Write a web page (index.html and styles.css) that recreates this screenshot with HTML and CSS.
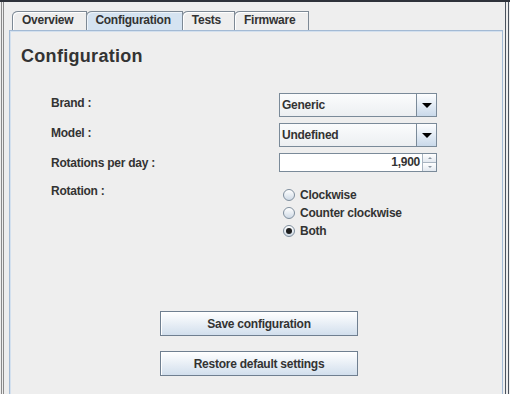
FILE: index.html
```html
<!DOCTYPE html>
<html lang="en">
<head>
    <meta charset="UTF-8">
    <meta name="viewport" content="width=device-width, initial-scale=1.0">
    <title>Configuration</title>
    <link rel="stylesheet" href="styles.css">
</head>
<body>
    <div class="window">
        <div class="tabpane">
            <div class="tabs">
                <div class="tab">Overview</div>
                <div class="tab active">Configuration</div>
                <div class="tab">Tests</div>
                <div class="tab">Firmware</div>
            </div>

            <div class="panel">
                <h1>Configuration</h1>

                <div class="form">
                    <label class="field-label">Brand :</label>
                    <div class="combo">
                        <span class="combo-value">Generic</span>
                        <span class="combo-arrow"></span>
                    </div>

                    <label class="field-label">Model :</label>
                    <div class="combo">
                        <span class="combo-value">Undefined</span>
                        <span class="combo-arrow"></span>
                    </div>

                    <label class="field-label">Rotations per day :</label>
                    <div class="spinner">
                        <span class="spinner-value">1,900</span>
                        <span class="spinner-buttons">
                            <span class="spin up"></span>
                            <span class="spin down"></span>
                        </span>
                    </div>

                    <label class="field-label top">Rotation :</label>
                    <div class="radios">
                        <div class="radio"><span class="radio-dot"></span>Clockwise</div>
                        <div class="radio"><span class="radio-dot"></span>Counter clockwise</div>
                        <div class="radio"><span class="radio-dot checked"></span>Both</div>
                    </div>
                </div>

                <div class="actions">
                    <button class="btn">Save configuration</button>
                    <button class="btn">Restore default settings</button>
                </div>
            </div>
        </div>
    </div>
</body>
</html>
```

FILE: styles.css
```css
* {
    margin: 0;
    padding: 0;
    box-sizing: border-box;
}

body {
    font-family: "Liberation Sans", Arial, sans-serif;
    font-size: 12px;
    font-weight: bold;
    letter-spacing: -0.25px;
    color: #333333;
    background: #eeeeee;
    border-top: 2px solid #2e323a;
    height: 100vh;
    overflow: hidden;
}

.window {
    margin: 0 1px 0 1px;
    height: 100%;
    border-left: 3px double #8a8a8a;
    border-right: 4px double #4b535e;
    padding-top: 9px;
}

.tabpane {
    margin: 0 2px 0 5px;
    height: 100%;
}

/* tab strip */
.tabs {
    display: flex;
    padding-left: 3px;
    height: 19px;
}

.tab {
    padding: 0 13px 2px 9px;
    line-height: 16px;
    border: 1px solid #7d8995;
    border-bottom: none;
    border-top-left-radius: 6px 5px;
    background: #eeeeee;
    box-shadow: inset 1px 1px 0 #ffffff;
}

.tab + .tab {
    margin-left: -1px;
}

.tab.active {
    padding: 0 11px 2px 8px;
    background: #d5e3f1;
    box-shadow: inset 1px 1px 0 #eef4fa;
}

/* panel */
.panel {
    height: 400px;
    border: 1px solid #a3bad4;
    box-shadow: inset 1px 1px 0 #d3e0ee;
    padding: 14px 0 0 11px;
}

h1 {
    font-size: 18px;
    line-height: 22px;
    letter-spacing: 0.3px;
}

.form {
    display: grid;
    grid-template-columns: 228px 158px;
    row-gap: 6px;
    margin: 26px 0 0 30px;
    align-items: center;
}

.field-label {
    align-self: start;
    line-height: 18px;
    margin-top: 1px;
}

.field-label.top {
    margin-top: 4px;
}

/* combo box */
.combo {
    display: flex;
    height: 24px;
    border: 1px solid #7a8a99;
    background: linear-gradient(#fbfcfd, #eceff2);
}

.combo-value {
    flex: 1;
    padding-left: 2px;
    line-height: 22px;
}

.combo-arrow {
    width: 20px;
    border-left: 1px solid #7a8a99;
    background: linear-gradient(#fdfeff, #c9d9ea);
    position: relative;
}

.combo-arrow::after {
    content: "";
    position: absolute;
    left: 5px;
    top: 9px;
    border-left: 5px solid transparent;
    border-right: 5px solid transparent;
    border-top: 5px solid #000000;
}

/* spinner */
.spinner {
    display: flex;
    height: 19px;
    border: 1px solid #7a8a99;
    background: #ffffff;
}

.spinner-value {
    flex: 1;
    text-align: right;
    padding-right: 2px;
    line-height: 17px;
}

.spinner-buttons {
    width: 14px;
    display: flex;
    flex-direction: column;
    border-left: 1px solid #a8b4c0;
}

.spin {
    flex: 1;
    position: relative;
    background: linear-gradient(#ffffff, #e3e9f0);
}

.spin.up {
    border-bottom: 1px solid #a8b4c0;
}

.spin::after {
    content: "";
    position: absolute;
    left: 5px;
    top: 3px;
    border-left: 2px solid transparent;
    border-right: 2px solid transparent;
}

.spin.up::after {
    border-bottom: 2px solid #8a96a2;
}

.spin.down::after {
    border-top: 2px solid #8a96a2;
}

/* radio group */
.radios {
    padding: 8px 0 0 4px;
}

.radio {
    display: flex;
    align-items: center;
    height: 18px;
}

.radio-dot {
    width: 12px;
    height: 12px;
    margin-right: 5px;
    border-radius: 50%;
    border: 1px solid #7f8e9d;
    background: linear-gradient(#ffffff, #cfdae6);
    position: relative;
}

.radio-dot.checked::after {
    content: "";
    position: absolute;
    left: 2px;
    top: 2px;
    width: 6px;
    height: 6px;
    border-radius: 50%;
    background: #1e1e1e;
}

/* buttons */
.actions {
    display: flex;
    flex-direction: column;
    gap: 15px;
    margin: 71px 0 0 139px;
}

.btn {
    width: 198px;
    height: 25px;
    font: inherit;
    letter-spacing: inherit;
    color: #333333;
    border: 1px solid #6f7f90;
    background: linear-gradient(#ffffff, #d2dfed);
    box-shadow: inset 1px 1px 0 #ffffff;
}
```
